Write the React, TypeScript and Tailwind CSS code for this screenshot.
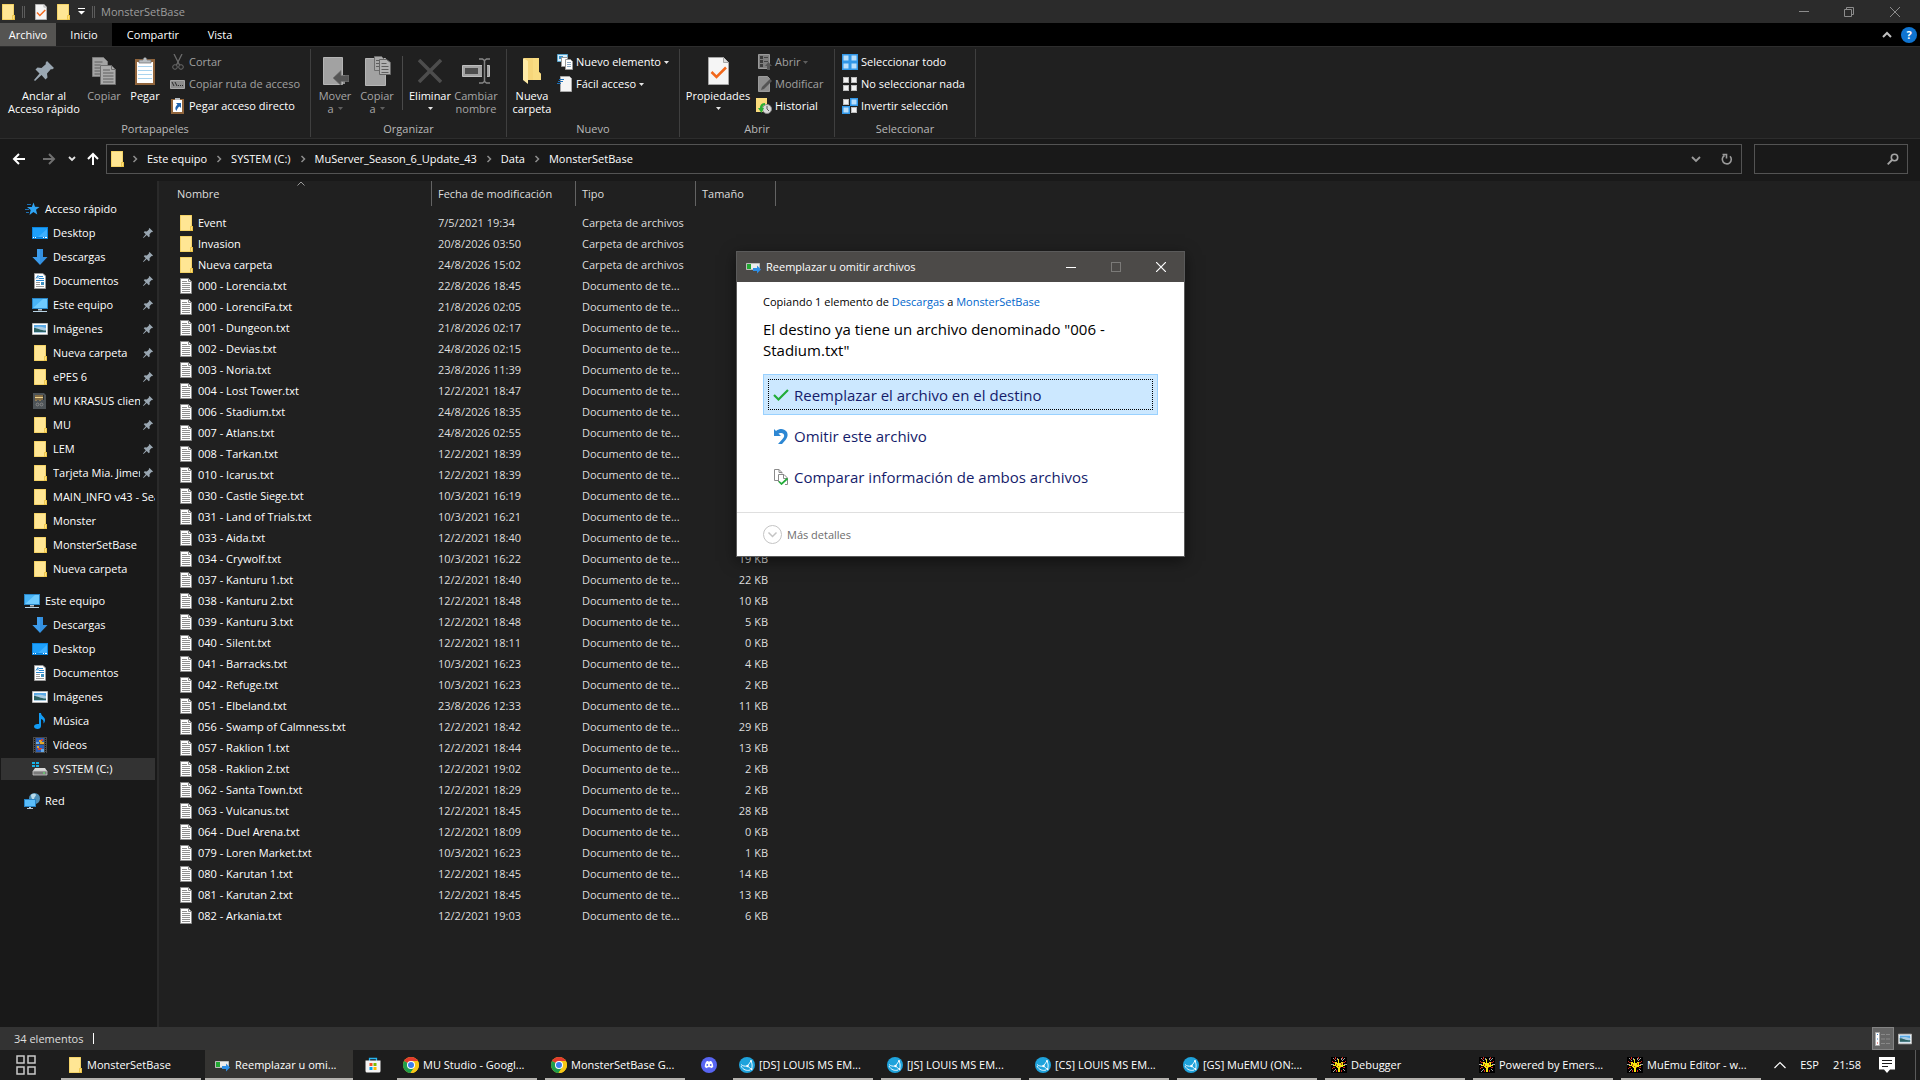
import type { ReactNode } from "react";

type TIcon = { className?: string };
type TFile = { name: string; date: string; size?: string; folder?: boolean };
type TSideItem = { label: string; icon: ReactNode; pinned?: boolean; active?: boolean };

/* ---------- icons ---------- */

const FolderIcon = ({ className = "h-4 w-4" }: TIcon) => (
    <svg className={`shrink-0 ${className}`} viewBox="0 0 16 16">
        <path d="M2 0h12v11h1v5H2z" fill="#e9c03e" />
        <path d="M2.500.500h11v11h-1v4h-10z" fill="#ffe694" />
        <path d="M12.500 11.500h2v4h-2z" fill="#ffdf80" stroke="#e9c03e" strokeWidth="0.700" />
    </svg>
);

const TextFileIcon = () => (
    <svg className="h-4 w-3 shrink-0" viewBox="0 0 12 16">
        <path d="M.500.500h8l3 3v12H.500z" fill="#fff" stroke="#8c8c8c" />
        <path d="M8.500.500v3h3" fill="none" stroke="#8c8c8c" />
        <path d="M2 3.500h5M2 5.500h8M2 7.500h8M2 9.500h8M2 11.500h8M2 13.500h8" stroke="#8f8f8f" />
    </svg>
);

const PinIcon = ({ className = "h-[10px] w-[10px]" }: TIcon) => (
    <svg className={`shrink-0 ${className}`} viewBox="0 0 20 20">
        <path d="M13 0l7 7-2 1.500-1-.500-4 4.500.500 4-2 2-4-4.500L1 20l-1-1 5.500-6.500L1.500 8.500l2-2 4 .500L12 3l-.500-1z" fill="#9aa7b2" />
    </svg>
);

const MonitorIcon = () => (
    <svg className="h-4 w-4 shrink-0" viewBox="0 0 16 16">
        <path d="M0 1h16v11H0z" fill="#2a86c7" />
        <path d="M1 2h14v9H1z" fill="#49b4f7" />
        <path d="M1 11L11 2h4v9z" fill="#6fcbff" />
        <path d="M6 12h4v1.500H6z" fill="#b9c3ca" />
        <path d="M1 14.500h14" stroke="#b9d3e4" />
    </svg>
);

const DesktopIcon = () => (
    <svg className="h-4 w-4 shrink-0" viewBox="0 0 16 16">
        <path d="M0 2h16v12H0z" fill="#0b84dd" />
        <path d="M1 3h14v9H1z" fill="#1ea0fb" />
        <path d="M6 12l9-8v8z" fill="#3fb0ff" />
        <path d="M1 12.500h1M3 12.500h1M11 12.500h1M13 12.500h2" stroke="#fff" />
    </svg>
);

const DownloadsIcon = () => (
    <svg className="h-4 w-4 shrink-0" viewBox="0 0 16 16">
        <path d="M5 0h6v8h4.500L8 16 .500 8H5z" fill="#3390e0" />
        <path d="M5 0h3v15L.500 8H5z" fill="#3e9dec" />
    </svg>
);

const DocumentsIcon = () => (
    <svg className="h-4 w-4 shrink-0" viewBox="0 0 16 16">
        <path d="M2.500.500h8.500l2.500 2.500v12.500h-11z" fill="#fff" stroke="#9b9b9b" />
        <path d="M4 5.500l2-3v3M7 3.500h4M7 5.500h5M4 7.500h8" stroke="#2a88d0" fill="none" />
        <path d="M4 9.500h4M4 11.500h4M4 13.500h8" stroke="#9a9a9a" />
        <path d="M9 9h3v3H9z" fill="#3d8fbf" />
    </svg>
);

const ImagesIcon = ({ className = "h-4 w-4" }: TIcon) => (
    <svg className={`shrink-0 ${className}`} viewBox="0 0 16 16">
        <path d="M.500 2.500h15v11H.500z" fill="#fff" stroke="#b5b5b5" />
        <path d="M2 4h12v4H2z" fill="#5aa9e6" />
        <path d="M2 7c4-2 7-1 12 0v5H2z" fill="#a9cbe2" />
        <path d="M2 7c4 0 6 2.500 12 2.500V11H2z" fill="#2d6263" />
    </svg>
);

const MusicIcon = () => (
    <svg className="h-4 w-4 shrink-0" viewBox="0 0 16 16">
        <path d="M7 0h2c0 3 4 4 4 7 0 1.500-.500 2.500-1.500 3.500.300-3-.500-4-2.500-4.500V13c0 1.700-1.500 3-3.500 3S2 15 2 13.500 3.500 11 5.500 11H7z" fill="#129cf5" />
    </svg>
);

const VideosIcon = () => (
    <svg className="h-4 w-4 shrink-0" viewBox="0 0 16 16">
        <path d="M1 0h14v16H1z" fill="#4a4a4a" />
        <path d="M2.500 1v15M13.500 1v15" stroke="#111" strokeDasharray="1 1" />
        <path d="M4 1h8v6H4zM4 8h8v7H4z" fill="#2b5fb8" />
        <path d="M7 3h3v2h2v2H8V5H7zM5 9h2v2H5z" fill="#e3a92b" />
        <path d="M9 2h2v2H9zM6 11h4v2H6z" fill="#d2452f" />
        <path d="M4 5h3v2H4zM9 12h3v3H9z" fill="#62a9e8" />
    </svg>
);

const DriveIcon = () => (
    <svg className="h-4 w-4 shrink-0" viewBox="0 0 16 16">
        <path d="M0 1h3v2H0zM4 1h3v2H4zM0 4h3v2H0zM4 4h3v2H4z" fill="#17b3ea" />
        <path d="M3 7h10l2 3H1z" fill="#d9d9d9" />
        <path d="M1 10h14v4H1z" fill="#7b7b7b" stroke="#c7c7c7" strokeWidth="0.800" />
        <path d="M11 12h2" stroke="#5eff6d" />
    </svg>
);

const NetworkIcon = () => (
    <svg className="h-4 w-4 shrink-0" viewBox="0 0 16 16">
        <circle cx="10.500" cy="5.500" r="5.500" fill="#4f90b8" />
        <path d="M7 2c2-2 5-1 5 0s-2 2-2 4-3 0-3-4z" fill="#b9dcec" />
        <path d="M0 6h12v8H0z" fill="#2683c6" />
        <path d="M1 7h10v6H1z" fill="#5bbdf9" />
        <path d="M5 14h2v1h2v1H3v-1h2z" fill="#b7c7d2" />
    </svg>
);

const QuickIcon = () => (
    <svg className="h-4 w-4 shrink-0" viewBox="0 0 16 16">
        <path d="M9.500 1.500l1.500 4.300 4.500.200-3.500 2.800 1.300 4.700-3.900-2.500L5.500 14l1.200-5L3 6h4.800z" fill="#2fa5f5" />
        <path d="M3 3.500h4M1 8.500h4M2 11.500h3" stroke="#1c6fb1" />
    </svg>
);

const ArchiveIcon = () => (
    <svg className="h-4 w-4 shrink-0" viewBox="0 0 16 16">
        <path d="M1 0h11l2 2v14H1z" fill="#4d5357" />
        <path d="M3 2h9v5H3z" fill="#2d3033" />
        <path d="M4 2v6M6 2v5M8 2v6M10 2v5" stroke="#d8a657" />
        <path d="M3 4.500h8" stroke="#f0d48c" />
        <circle cx="5.500" cy="11.500" r="1.400" fill="none" stroke="#888" />
        <circle cx="9.500" cy="11.500" r="1.400" fill="none" stroke="#888" />
    </svg>
);

const TransferIcon = () => (
    <svg className="h-4 w-4 shrink-0" viewBox="0 0 16 16">
        <path d="M.500 4.500h13v6H.500z" fill="#ededed" stroke="#bdbdbd" />
        <path d="M1 5h4v5H1z" fill="#23a833" />
        <path d="M7 9h4V6.500l4 4-4 4V12H7z" fill="#2f8fe6" />
    </svg>
);

const PropsIcon = ({ className = "h-4 w-3" }: TIcon) => (
    <svg className={`shrink-0 ${className}`} viewBox="0 0 21 28">
        <path d="M.500.500h15l5 5v22H.500z" fill="#f5f5f5" stroke="#a5a5a5" />
        <path d="M15.500.500v5h5" fill="#dcdcdc" stroke="#a5a5a5" />
        <path d="M3.500 15l5 5L18 10.500" fill="none" stroke="#f2681c" strokeWidth="2.500" />
    </svg>
);

const PinLarge = () => <PinIcon className="h-5 w-5" />;

const CopyIcon = () => (
    <svg className="h-7 w-6" viewBox="0 0 24 28">
        <path d="M.500.500h11l4 4v15H.500z" fill="#a3a3a3" stroke="#7a7a7a" />
        <path d="M2.500 5h8M2.500 8h6M2.500 11h6M2.500 14h6M2.500 17h6" stroke="#5f5f5f" />
        <path d="M8.500 8.500h11l4 4v15h-15z" fill="#ababab" stroke="#6e6e6e" />
        <path d="M19.500 8.500v4h4" fill="none" stroke="#6e6e6e" />
        <path d="M11 13h7M11 16h10.500M11 19h10.500M11 22h10.500M11 25h10.500" stroke="#5f5f5f" />
    </svg>
);

const PasteIcon = () => (
    <svg className="h-7 w-5" viewBox="0 0 20 28">
        <path d="M0 2h20v26H0z" fill="#91653c" />
        <path d="M2 5h16v21H2z" fill="#fff" />
        <path d="M3 9.500h14M3 13.500h14M3 17.500h14M3 21.500h14" stroke="#a9d3ee" />
        <path d="M4 6V3h4c0-3.500 4-3.500 4 0h4v3z" fill="#b9bec2" stroke="#6b6b6b" strokeWidth="0.700" />
    </svg>
);

const MoveToIcon = () => (
    <svg className="h-7 w-7" viewBox="0 0 28 28">
        <path d="M2.500.500h19v27h-19z" fill="#a2a2a2" stroke="#b5b5b5" />
        <path d="M22 18h2v9h-2z" fill="#8f8f8f" />
        <path d="M12 21l8-7.500v5h8v6h-8v4z" fill="#555" stroke="#777" strokeWidth="0.700" />
    </svg>
);

const CopyToIcon = () => (
    <svg className="h-[30px] w-7" viewBox="0 0 28 30">
        <path d="M2.500 2.500h20v27h-20z" fill="#a2a2a2" stroke="#b5b5b5" />
        <path d="M11.500.500h7l3 3v11h-10z" fill="#a9a9a9" stroke="#6e6e6e" />
        <path d="M13 4.500h4M13 7.500h3M13 10.500h3" stroke="#5f5f5f" />
        <path d="M16.500 3.500h7l4 3v12h-11z" fill="#b1b1b1" stroke="#666" />
        <path d="M18.500 7.500h5M18.500 10.500h7M18.500 13.500h7M18.500 16.500h7" stroke="#5f5f5f" />
    </svg>
);

const DeleteIcon = () => (
    <svg className="h-6 w-6" viewBox="0 0 24 24">
        <path d="M1 1l22 22M23 1L1 23" stroke="#4d4d4d" strokeWidth="3.500" />
    </svg>
);

const RenameIcon = () => (
    <svg className="h-[26px] w-7" viewBox="0 0 28 26">
        <path d="M.500 7.500h27v11H.500z" fill="#a3a3a3" stroke="#bdbdbd" />
        <path d="M3 10h13v6H3z" fill="#4d4d4d" />
        <path d="M20 7h5v12h-5z" fill="#202020" />
        <path d="M17 1h3.500l2 1.500 2-1.500H28M17 25h3.500l2-1.500 2 1.500H28M22.500 2v22" fill="none" stroke="#858585" strokeWidth="1.500" />
    </svg>
);

const NewFolderIcon = () => (
    <svg className="h-7 w-[18px]" viewBox="0 0 18 28">
        <path d="M1 1h15v14l2 2v6H1z" fill="#f6d67a" />
        <path d="M10 1h6v14l2 2v6h-8z" fill="#f9dc82" />
        <path d="M0 1l5 3v23L0 23z" fill="#ffeba6" />
    </svg>
);

const ScissorsIcon = () => (
    <svg className="h-4 w-4 shrink-0" viewBox="0 0 16 16" fill="none" stroke="#6b6b6b">
        <path d="M4 0l5.500 11M12 0L6.500 11" strokeWidth="1.300" />
        <circle cx="5" cy="13" r="2.300" />
        <circle cx="11" cy="13" r="2.300" />
    </svg>
);

const PathIcon = () => (
    <svg className="h-4 w-4 shrink-0" viewBox="0 0 16 16">
        <path d="M.500 4.500h14v8H.500z" fill="#8d8d8d" stroke="#a8a8a8" />
        <path d="M2 6l2 4M5 6l2 4M8 9.500h1M10 9.500h1M12 9.500h1" stroke="#2b2b2b" />
    </svg>
);

const ShortcutIcon = () => (
    <svg className="h-4 w-4 shrink-0" viewBox="0 0 16 16">
        <path d="M1 1h13v15H1z" fill="#91653c" />
        <path d="M3 2h9v12H3z" fill="#fff" />
        <path d="M5 0h5v2H5z" fill="#b9bec2" />
        <path d="M6 5h5v5L9.500 8.500C8 9.500 7 11 6.500 13c-2-2.500-1-5 1-6.300z" fill="#1e62ad" />
    </svg>
);

const NewItemIcon = () => (
    <svg className="h-4 w-4 shrink-0" viewBox="0 0 16 16">
        <path d="M.500.500h10v7H.500z" fill="#d8eefb" stroke="#5aa7cf" />
        <path d="M2 2h4v3H2z" fill="#3a93c9" />
        <path d="M4.500 3.500h6v9h-6z" fill="#fff" stroke="#999" />
        <path d="M8.500 5.500h5l2 2v8h-7z" fill="#fff" stroke="#999" />
        <path d="M10 8.500h4M10 10.500h4M10 12.500h4" stroke="#8aa9c6" />
    </svg>
);

const EasyAccessIcon = () => (
    <svg className="h-4 w-4 shrink-0" viewBox="0 0 16 16">
        <path d="M3.500.500h9l2 2v13h-11z" fill="#f6f6f6" stroke="#a9a9a9" />
        <path d="M2 3.500h5M1 5.500h5M0 7.500h4" stroke="#1c6fb8" />
    </svg>
);

const OpenIcon = () => (
    <svg className="h-4 w-4 shrink-0" viewBox="0 0 16 16">
        <path d="M2.500.500h11v14h-11z" fill="#7e7e7e" stroke="#9a9a9a" />
        <path d="M4 2h3v3H4zM4 6h3v3H4zM4 10h3v3H4z" fill="#3c3c3c" />
        <path d="M8 3.500h4M8 7.500h4" stroke="#444" />
        <path d="M9 12l3.500-4 3.500 4h-2v4h-3v-4z" fill="#555" />
    </svg>
);

const EditIcon = () => (
    <svg className="h-4 w-4 shrink-0" viewBox="0 0 16 16">
        <path d="M2.500.500h9l2 2v13h-11z" fill="#8d8d8d" stroke="#9a9a9a" />
        <path d="M5 14l1-3 8-8 2 2-8 8z" fill="#555" />
    </svg>
);

const HistoryIcon = () => (
    <svg className="h-4 w-4 shrink-0" viewBox="0 0 16 16">
        <path d="M0 0h11v14H0z" fill="#fbdc7c" />
        <circle cx="11" cy="11" r="4.500" fill="#d9d9d9" stroke="#8a8a8a" />
        <path d="M11 8v3l2 2" fill="none" stroke="#555" />
        <path d="M9 5C5 5 4 8 4 10H2l3.500 5L8 10H6.500C6.500 8 7.500 7 9 7z" fill="#2cae35" />
    </svg>
);

const tileColors = {
    all: ["b", "b", "b", "b"],
    none: ["w", "w", "w", "w"],
    invert: ["w", "b", "b", "w"],
};

const TilesIcon = ({ kind }: { kind: keyof typeof tileColors }) => (
    <svg className="h-4 w-4 shrink-0" viewBox="0 0 16 16">
        {tileColors[kind].map((c, i) => {
            const x = (i % 2) * 8;
            const y = Math.floor(i / 2) * 8;
            return c === "b" ? (
                <g key={i}>
                    <rect x={x} y={y} width="8" height="8" fill="#3197e8" />
                    <rect x={x + 1.500} y={y + 1.500} width="5" height="5" fill="#b9defa" />
                </g>
            ) : (
                <rect key={i} x={x + 1.500} y={y + 1.500} width="5" height="5" fill="#f2f2f2" stroke="#bdbdbd" />
            );
        })}
    </svg>
);

const Caret = ({ dim }: { dim?: boolean }) => (
    <svg className="h-[3px] w-[5px] shrink-0" viewBox="0 0 5 3">
        <path d="M0 0h5L2.500 3z" fill={dim ? "#5e5e5e" : "#e6e6e6"} />
    </svg>
);

const Chevron = ({ className = "" }: TIcon) => (
    <svg className={`h-2 w-2 shrink-0 ${className}`} viewBox="0 0 8 8">
        <path d="M2.500 1l3 3-3 3" fill="none" stroke="#8d8d8d" strokeWidth="1.500" />
    </svg>
);

const ChromeIcon = () => (
    <svg className="h-4 w-4 shrink-0" viewBox="0 0 16 16">
        <circle cx="8" cy="8" r="8" fill="#f7c716" />
        <path d="M8 8L1.100 4A8 8 0 0 1 14.900 4z" fill="#e33b2e" />
        <path d="M8 8L1.100 4A8 8 0 0 0 7.500 16L11.500 10z" fill="#1f9e4b" />
        <path d="M8 4h6.900A8 8 0 0 1 7.500 16L11.500 10z" fill="#f7c716" />
        <circle cx="8" cy="8" r="4" fill="#fff" />
        <circle cx="8" cy="8" r="3" fill="#3b7ded" />
    </svg>
);

const DiscordIcon = () => (
    <svg className="h-4 w-4" viewBox="0 0 16 16">
        <circle cx="8" cy="8" r="8" fill="#5865f2" />
        <path d="M5.300 4.500c1-.500 1.500-.500 1.700-.500l.300.500h1.400L9 4c.200 0 .700 0 1.700.500 1 1.500 1.600 3.500 1.500 5.500-.800.700-1.600 1-2.300 1.200l-.500-.900H6.600l-.500.900C5.400 11 4.600 10.700 3.800 10c-.100-2 .500-4 1.500-5.500z" fill="#fff" />
        <circle cx="6.300" cy="8" r="0.900" fill="#5865f2" />
        <circle cx="9.700" cy="8" r="0.900" fill="#5865f2" />
    </svg>
);

const StoreIcon = () => (
    <svg className="h-4 w-4" viewBox="0 0 16 16">
        <path d="M4.500 4V1.500h7V4" fill="none" stroke="#27b5f0" strokeWidth="1.300" />
        <path d="M.500 3.500h15V14a1.500 1.500 0 0 1-1.500 1.500H2A1.500 1.500 0 0 1 .500 14z" fill="#f4f4f4" />
        <path d="M4.500 6h3v3h-3z" fill="#f25022" />
        <path d="M8.500 6h3v3h-3z" fill="#7fba00" />
        <path d="M4.500 10h3v3h-3z" fill="#00a4ef" />
        <path d="M8.500 10h3v3h-3z" fill="#ffb900" />
    </svg>
);

const ServerIcon = () => (
    <svg className="h-4 w-4 shrink-0" viewBox="0 0 16 16">
        <circle cx="8" cy="8" r="8" fill="#1fa3dc" />
        <path d="M2 7.500c1.500 1.500 4 2 6.500 1.500L12 4M8.500 9l4 3.500M12 4c1.300 2.500 1.500 5.500.500 8.500M2 9c2 4 6 5 9 4" fill="none" stroke="#e8f7ff" />
        <circle cx="8.500" cy="9" r="1.200" fill="#fff" />
        <circle cx="12" cy="4" r="1" fill="#fff" />
        <circle cx="12.500" cy="12.300" r="1" fill="#fff" />
    </svg>
);

const MuIcon = () => (
    <svg className="h-4 w-4 shrink-0" viewBox="0 0 16 16" shapeRendering="crispEdges">
        <path d="M0 0h16v16H0z" fill="#000" />
        <path d="M2 1h1v1h1v1h1v1H4V3H3V2H2zM13 1h1v1h-1v1h-1v1h-1V3h1V2h1zM0 7h3v1H0zM13 7h3v1h-3zM2 14h1v-1h1v-1h1v1H4v1H3v1H2zM13 14h1v-1h-1v-1h-1v1h1zM6 1h1v2H6zM10 1h1v2h-1z" fill="#a3a3a3" />
        <path d="M1 4h1v1h2v1H2V5H1zM14 4h1v1h-1v1h-2V5h2zM4 0h1v2H4zM11 0h1v2h-1zM1 11h1v-1h2v1H2v1H1zM14 11h-2v-1h2zM5 13h1v2H5zM10 13h1v2h-1zM3 2h1v1H3z" fill="#cf2a20" />
        <path d="M7 2h1v4h2V5h2v3h2v1h-2v1h-2v1H9v4H7v-4H6v-1H5V9H2V8h2V5h2v1h1z" fill="#f5e60f" />
        <path d="M5 7h1v2H5zM10 6h1v2h-1zM7 9h1v1H7zM9 10h1v1H9z" fill="#c0391c" />
    </svg>
);

/* ---------- data ---------- */

const quickAccess: TSideItem[] = [
    { label: "Desktop", icon: <DesktopIcon />, pinned: true },
    { label: "Descargas", icon: <DownloadsIcon />, pinned: true },
    { label: "Documentos", icon: <DocumentsIcon />, pinned: true },
    { label: "Este equipo", icon: <MonitorIcon />, pinned: true },
    { label: "Imágenes", icon: <ImagesIcon />, pinned: true },
    { label: "Nueva carpeta", icon: <FolderIcon />, pinned: true },
    { label: "ePES 6", icon: <FolderIcon />, pinned: true },
    { label: "MU KRASUS cliente", icon: <ArchiveIcon />, pinned: true },
    { label: "MU", icon: <FolderIcon />, pinned: true },
    { label: "LEM", icon: <FolderIcon />, pinned: true },
    { label: "Tarjeta Mia. Jimena", icon: <FolderIcon />, pinned: true },
    { label: "MAIN_INFO v43 - Season", icon: <FolderIcon /> },
    { label: "Monster", icon: <FolderIcon /> },
    { label: "MonsterSetBase", icon: <FolderIcon /> },
    { label: "Nueva carpeta", icon: <FolderIcon /> },
];

const computer: TSideItem[] = [
    { label: "Descargas", icon: <DownloadsIcon /> },
    { label: "Desktop", icon: <DesktopIcon /> },
    { label: "Documentos", icon: <DocumentsIcon /> },
    { label: "Imágenes", icon: <ImagesIcon /> },
    { label: "Música", icon: <MusicIcon /> },
    { label: "Vídeos", icon: <VideosIcon /> },
    { label: "SYSTEM (C:)", icon: <DriveIcon />, active: true },
];

const files: TFile[] = [
    { name: "Event", date: "7/5/2021 19:34", folder: true },
    { name: "Invasion", date: "20/8/2026 03:50", folder: true },
    { name: "Nueva carpeta", date: "24/8/2026 15:02", folder: true },
    { name: "000 - Lorencia.txt", date: "22/8/2026 18:45" },
    { name: "000 - LorenciFa.txt", date: "21/8/2026 02:05" },
    { name: "001 - Dungeon.txt", date: "21/8/2026 02:17" },
    { name: "002 - Devias.txt", date: "24/8/2026 02:15" },
    { name: "003 - Noria.txt", date: "23/8/2026 11:39" },
    { name: "004 - Lost Tower.txt", date: "12/2/2021 18:47" },
    { name: "006 - Stadium.txt", date: "24/8/2026 18:35" },
    { name: "007 - Atlans.txt", date: "24/8/2026 02:55" },
    { name: "008 - Tarkan.txt", date: "12/2/2021 18:39" },
    { name: "010 - Icarus.txt", date: "12/2/2021 18:39" },
    { name: "030 - Castle Siege.txt", date: "10/3/2021 16:19" },
    { name: "031 - Land of Trials.txt", date: "10/3/2021 16:21" },
    { name: "033 - Aida.txt", date: "12/2/2021 18:40" },
    { name: "034 - Crywolf.txt", date: "10/3/2021 16:22", size: "19 KB" },
    { name: "037 - Kanturu 1.txt", date: "12/2/2021 18:40", size: "22 KB" },
    { name: "038 - Kanturu 2.txt", date: "12/2/2021 18:48", size: "10 KB" },
    { name: "039 - Kanturu 3.txt", date: "12/2/2021 18:48", size: "5 KB" },
    { name: "040 - Silent.txt", date: "12/2/2021 18:11", size: "0 KB" },
    { name: "041 - Barracks.txt", date: "10/3/2021 16:23", size: "4 KB" },
    { name: "042 - Refuge.txt", date: "10/3/2021 16:23", size: "2 KB" },
    { name: "051 - Elbeland.txt", date: "23/8/2026 12:33", size: "11 KB" },
    { name: "056 - Swamp of Calmness.txt", date: "12/2/2021 18:42", size: "29 KB" },
    { name: "057 - Raklion 1.txt", date: "12/2/2021 18:44", size: "13 KB" },
    { name: "058 - Raklion 2.txt", date: "12/2/2021 19:02", size: "2 KB" },
    { name: "062 - Santa Town.txt", date: "12/2/2021 18:29", size: "2 KB" },
    { name: "063 - Vulcanus.txt", date: "12/2/2021 18:45", size: "28 KB" },
    { name: "064 - Duel Arena.txt", date: "12/2/2021 18:09", size: "0 KB" },
    { name: "079 - Loren Market.txt", date: "10/3/2021 16:23", size: "1 KB" },
    { name: "080 - Karutan 1.txt", date: "12/2/2021 18:45", size: "14 KB" },
    { name: "081 - Karutan 2.txt", date: "12/2/2021 18:45", size: "13 KB" },
    { name: "082 - Arkania.txt", date: "12/2/2021 19:03", size: "6 KB" },
];

const crumbs = ["Este equipo", "SYSTEM (C:)", "MuServer_Season_6_Update_43", "Data", "MonsterSetBase"];

/* ---------- ribbon ---------- */

const BigButton = ({
    icon,
    lines,
    width,
    dim,
    caret,
}: {
    icon: ReactNode;
    lines: string[];
    width: string;
    dim?: boolean;
    caret?: "inline" | "below";
}) => (
    <button className={`flex shrink-0 flex-col items-center pt-1 ${width} ${dim ? "text-[#a6a6a6]" : "text-white"}`}>
        <span className="flex h-9 items-center justify-center">{icon}</span>
        {lines.map((line, i) => (
            <span key={line} className="flex h-[13px] items-center gap-1 whitespace-nowrap leading-[13px]">
                {line}
                {caret === "inline" && i === lines.length - 1 && <Caret dim />}
            </span>
        ))}
        {caret === "below" && (
            <span className="flex h-[13px] items-center">
                <Caret />
            </span>
        )}
    </button>
);

const SmallButton = ({ icon, label, dim, caret }: { icon: ReactNode; label: string; dim?: boolean; caret?: boolean }) => (
    <button className={`flex h-[22px] items-center gap-[3px] whitespace-nowrap ${dim ? "text-[#a0a0a0]" : "text-white"}`}>
        {icon}
        <span>{label}</span>
        {caret && <Caret dim={dim} />}
    </button>
);

const RibbonGroup = ({ title, width, children }: { title: string; width: string; children: ReactNode }) => (
    <section className={`flex shrink-0 flex-col border-r border-[#3f3f3f] ${width}`}>
        <div className="flex h-[72px] items-start">{children}</div>
        <h2 className="text-center leading-4 text-[#b8b8b8]">{title}</h2>
    </section>
);

const Ribbon = () => (
    <div className="flex border-y border-[#2d2d2d] bg-[#202020] pt-[2px] pb-px">
        <RibbonGroup title="Portapapeles" width="w-[311px]">
            <BigButton icon={<PinLarge />} lines={["Anclar al", "Acceso rápido"]} width="w-[88px]" />
            <BigButton icon={<CopyIcon />} lines={["Copiar"]} width="w-[32px]" dim />
            <BigButton icon={<PasteIcon />} lines={["Pegar"]} width="w-[50px]" />
            <div className="flex flex-col pt-[2px]">
                <SmallButton icon={<ScissorsIcon />} label="Cortar" dim />
                <SmallButton icon={<PathIcon />} label="Copiar ruta de acceso" dim />
                <SmallButton icon={<ShortcutIcon />} label="Pegar acceso directo" />
            </div>
        </RibbonGroup>
        <RibbonGroup title="Organizar" width="w-[196px]">
            <BigButton icon={<MoveToIcon />} lines={["Mover", "a"]} width="ml-[3px] w-[42px]" dim caret="inline" />
            <BigButton icon={<CopyToIcon />} lines={["Copiar", "a"]} width="w-[42px]" dim caret="inline" />
            <span className="mx-1 mt-[7px] h-[54px] w-px bg-[#4a4a4a]" />
            <BigButton icon={<DeleteIcon />} lines={["Eliminar"]} width="w-[46px]" caret="below" />
            <BigButton icon={<RenameIcon />} lines={["Cambiar", "nombre"]} width="w-[46px]" dim />
        </RibbonGroup>
        <RibbonGroup title="Nuevo" width="w-[173px]">
            <BigButton icon={<NewFolderIcon />} lines={["Nueva", "carpeta"]} width="w-[50px]" />
            <div className="flex flex-col pt-[2px]">
                <SmallButton icon={<NewItemIcon />} label="Nuevo elemento" caret />
                <SmallButton icon={<EasyAccessIcon />} label="Fácil acceso" caret />
            </div>
        </RibbonGroup>
        <RibbonGroup title="Abrir" width="w-[155px]">
            <BigButton icon={<PropsIcon className="h-7 w-[21px]" />} lines={["Propiedades"]} width="w-[76px]" caret="below" />
            <div className="flex flex-col pt-[2px]">
                <SmallButton icon={<OpenIcon />} label="Abrir" dim caret />
                <SmallButton icon={<EditIcon />} label="Modificar" dim />
                <SmallButton icon={<HistoryIcon />} label="Historial" />
            </div>
        </RibbonGroup>
        <RibbonGroup title="Seleccionar" width="w-[141px]">
            <div className="flex flex-col pt-[2px] pl-[7px]">
                <SmallButton icon={<TilesIcon kind="all" />} label="Seleccionar todo" />
                <SmallButton icon={<TilesIcon kind="none" />} label="No seleccionar nada" />
                <SmallButton icon={<TilesIcon kind="invert" />} label="Invertir selección" />
            </div>
        </RibbonGroup>
    </div>
);

/* ---------- window chrome ---------- */

const TitleBar = () => (
    <header className="flex h-[23px] items-center bg-[#2b2b2b]">
        <FolderIcon />
        <span className="ml-[6px] h-3 w-[3px] border-x border-[#5c5c5c]" />
        <span className="ml-[10px] flex">
            <PropsIcon />
        </span>
        <FolderIcon className="ml-2 h-4 w-4" />
        <svg className="ml-[7px] h-[7px] w-[7px]" viewBox="0 0 7 7">
            <path d="M0 .500h7" stroke="#fff" />
            <path d="M0 3h7L3.500 6.500z" fill="#fff" />
        </svg>
        <span className="ml-[7px] h-3 w-[3px] border-x border-[#5c5c5c]" />
        <h1 className="ml-[6px] flex-1 text-[#9d9d9d]">MonsterSetBase</h1>
        <button aria-label="Minimizar" className="flex h-full w-[45px] items-center justify-center">
            <span className="h-px w-[10px] bg-[#8c8c8c]" />
        </button>
        <button aria-label="Restaurar" className="flex h-full w-[46px] items-center justify-center">
            <svg className="h-[10px] w-[10px]" viewBox="0 0 10 10" fill="none" stroke="#8c8c8c">
                <path d="M.500 2.500h7v7h-7zM2.500 2.500v-2h7v7h-2" />
            </svg>
        </button>
        <button aria-label="Cerrar" className="mr-[2px] flex h-full w-[46px] items-center justify-center">
            <svg className="h-[10px] w-[10px]" viewBox="0 0 10 10" stroke="#8c8c8c">
                <path d="M0 0l10 10M10 0L0 10" />
            </svg>
        </button>
    </header>
);

const Tabs = () => (
    <nav className="flex h-[23px] items-center bg-black text-white">
        <button className="h-full w-14 bg-[#555452]">Archivo</button>
        <button className="h-full w-14 bg-[#202020]">Inicio</button>
        <button className="h-full w-[82px]">Compartir</button>
        <button className="h-full w-[52px]">Vista</button>
        <span className="flex-1" />
        <button aria-label="Minimizar la cinta" className="mr-[9px]">
            <svg className="h-[10px] w-[10px]" viewBox="0 0 10 10">
                <path d="M1 7l4-4 4 4" fill="none" stroke="#c0c0c0" strokeWidth="2" />
            </svg>
        </button>
        <button aria-label="Ayuda" className="mr-[3px] flex h-4 w-4 items-center justify-center rounded-full bg-[#0f74d1] font-bold">
            ?
        </button>
    </nav>
);

const AddressBar = () => (
    <div className="flex items-center bg-[#191919] pt-[5px] pr-3 pb-[7px] pl-3">
        <button aria-label="Atrás">
            <svg className="h-[14px] w-[14px]" viewBox="0 0 14 14">
                <path d="M13 7H2M7 2L2 7l5 5" fill="none" stroke="#fff" strokeWidth="2" />
            </svg>
        </button>
        <button aria-label="Adelante" className="ml-4">
            <svg className="h-[14px] w-[14px]" viewBox="0 0 14 14">
                <path d="M1 7h11M7 2l5 5-5 5" fill="none" stroke="#6f6f6f" strokeWidth="2" />
            </svg>
        </button>
        <button aria-label="Ubicaciones recientes" className="ml-3">
            <svg className="h-2 w-2" viewBox="0 0 8 8">
                <path d="M1 2l3 3 3-3" fill="none" stroke="#e4e4e4" strokeWidth="1.800" />
            </svg>
        </button>
        <button aria-label="Subir" className="ml-[10px]">
            <svg className="h-[14px] w-[14px]" viewBox="0 0 14 14">
                <path d="M7 13V2M2 7l5-5 5 5" fill="none" stroke="#fff" strokeWidth="2" />
            </svg>
        </button>
        <div className="ml-[6px] flex h-[30px] flex-1 items-center border border-[#535353] pl-[2px] text-white">
            <FolderIcon />
            {crumbs.map((c, i) => (
                <span key={c} className="flex items-center">
                    <Chevron className={i === 0 ? "mr-2 ml-[6px]" : "mx-2"} />
                    <a href="#">{c}</a>
                </span>
            ))}
            <span className="flex-1" />
            <button aria-label="Ubicaciones anteriores" className="mr-5">
                <svg className="h-[10px] w-[10px]" viewBox="0 0 10 10">
                    <path d="M1 3l4 4 4-4" fill="none" stroke="#9a9a9a" strokeWidth="1.800" />
                </svg>
            </button>
            <button aria-label="Actualizar" className="mr-2">
                <svg className="h-3 w-3" viewBox="0 0 12 12">
                    <path d="M3.500 2.500A4.500 4.500 0 1 0 9 3.200M1.500 1.500h4v4" fill="none" stroke="#9a9a9a" strokeWidth="1.600" />
                </svg>
            </button>
        </div>
        <label className="ml-3 flex h-[30px] w-[154px] items-center border border-[#535353] pr-2">
            <input aria-label="Buscar en MonsterSetBase" className="min-w-0 flex-1 bg-transparent text-white outline-none" />
            <svg className="h-3 w-3" viewBox="0 0 12 12">
                <circle cx="7.500" cy="4.500" r="3.200" fill="none" stroke="#a5a5a5" strokeWidth="1.600" />
                <path d="M5 7L.700 11.300" stroke="#a5a5a5" strokeWidth="1.800" />
            </svg>
        </label>
    </div>
);

/* ---------- navigation pane ---------- */

const SideRoot = ({ label, icon }: TSideItem) => (
    <a href="#" className="flex h-6 items-center gap-[5px] pl-6">
        {icon}
        {label}
    </a>
);

const SideRow = ({ label, icon, pinned, active }: TSideItem) => (
    <a href="#" className={`ml-px mr-[2px] flex h-6 items-center pl-[31px] ${active ? "border-y border-[#191919] bg-[#333]" : ""}`}>
        {icon}
        <span className="ml-[5px] min-w-0 flex-1 overflow-hidden whitespace-nowrap">{label}</span>
        {pinned && <PinIcon className="mr-[2px] ml-[3px] h-[10px] w-[10px]" />}
    </a>
);

const Sidebar = () => (
    <nav className="w-[159px] shrink-0 border-r-2 border-[#2a2a2a] bg-[#191919] pt-4 text-white">
        <SideRoot label="Acceso rápido" icon={<QuickIcon />} />
        {quickAccess.map((item, i) => (
            <SideRow key={i} {...item} />
        ))}
        <div className="mt-2">
            <SideRoot label="Este equipo" icon={<MonitorIcon />} />
            {computer.map((item) => (
                <SideRow key={item.label} {...item} />
            ))}
        </div>
        <div className="mt-2">
            <SideRoot label="Red" icon={<NetworkIcon />} />
        </div>
    </nav>
);

/* ---------- file list ---------- */

const FileTable = () => (
    <main className="min-w-0 flex-1 bg-[#202020] pl-3">
        <table className="table-fixed border-separate border-spacing-0 text-[#dedede]">
            <thead>
                <tr className="h-[25px] text-left">
                    <th className="relative w-[261px] border-r border-[#636363] p-0 pl-[6px] font-normal">
                        Nombre
                        <svg className="absolute top-0 left-1/2 h-[5px] w-2 -translate-x-1/2" viewBox="0 0 8 5">
                            <path d="M.500 4.500L4 1l3.500 3.500" fill="none" stroke="#9a9a9a" />
                        </svg>
                    </th>
                    <th className="w-[144px] border-r border-[#636363] p-0 pl-[6px] font-normal">Fecha de modificación</th>
                    <th className="w-[120px] border-r border-[#636363] p-0 pl-[6px] font-normal">Tipo</th>
                    <th className="w-[80px] border-r border-[#636363] p-0 pl-[6px] font-normal">Tamaño</th>
                </tr>
            </thead>
            <tbody>
                <tr className="h-[6px]" />
                {files.map((f) => (
                    <tr key={f.name} className="h-[21px] whitespace-nowrap">
                        <td className="p-0 text-white">
                            <span className="flex items-center gap-[2px] pl-[5px]">
                                <span className="flex w-5 justify-center">{f.folder ? <FolderIcon /> : <TextFileIcon />}</span>
                                {f.name}
                            </span>
                        </td>
                        <td className="p-0 pl-[6px]">{f.date}</td>
                        <td className="p-0 pl-[6px]">{f.folder ? "Carpeta de archivos" : "Documento de te..."}</td>
                        <td className="p-0 pr-2 text-right">{f.size}</td>
                    </tr>
                ))}
            </tbody>
        </table>
    </main>
);

/* ---------- dialog ---------- */

const ReplaceDialog = () => (
    <section
        role="dialog"
        aria-label="Reemplazar u omitir archivos"
        className="absolute top-[251px] left-[736px] w-[449px] border border-[#5a5a5a] bg-white text-black shadow-[0_4px_14px_rgba(0,0,0,0.5)]"
    >
        <header className="flex h-[30px] items-center bg-[#4c4a48] pl-[9px] text-white">
            <TransferIcon />
            <h2 className="ml-1 flex-1">Reemplazar u omitir archivos</h2>
            <button aria-label="Minimizar" className="flex h-full w-[45px] items-center justify-center">
                <span className="h-px w-[10px] bg-white" />
            </button>
            <button aria-label="Maximizar" disabled className="flex h-full w-[45px] items-center justify-center">
                <span className="h-[10px] w-[10px] border border-[#7b7a78]" />
            </button>
            <button aria-label="Cerrar" className="flex h-full w-[46px] items-center justify-center">
                <svg className="h-[10px] w-[10px]" viewBox="0 0 10 10" stroke="#fff" strokeWidth="1.200">
                    <path d="M0 0l10 10M10 0L0 10" />
                </svg>
            </button>
        </header>

        <div className="px-[26px] pt-3">
            <p className="leading-4">
                Copiando 1 elemento de{" "}
                <a href="#" className="text-[#0066cc]">
                    Descargas
                </a>{" "}
                a{" "}
                <a href="#" className="text-[#0066cc]">
                    MonsterSetBase
                </a>
            </p>
            <p className="mt-[9px] pr-10 text-[15px] leading-[21px]">El destino ya tiene un archivo denominado "006 - Stadium.txt"</p>

            <div className="mt-[13px] flex flex-col text-[15px] text-[#151c6b]">
                <button className="border border-[#99d1ff] bg-[#cce8ff] p-1 text-left">
                    <span className="flex h-[31px] items-center gap-[5px] border border-dotted border-black pl-1">
                        <svg className="h-4 w-4" viewBox="0 0 16 16">
                            <path d="M1 8l4.500 4.500L15 3" fill="none" stroke="#22ac38" strokeWidth="2.200" />
                        </svg>
                        Reemplazar el archivo en el destino
                    </span>
                </button>
                <button className="flex h-[41px] items-center gap-[5px] pl-[10px]">
                    <svg className="h-4 w-4" viewBox="0 0 16 16">
                        <path d="M1 1l2 2c4-3 8-2.500 10.500.500 2 3 1 6-1 8.500L9 16H5l4.500-5c2-2 2-4 1-5S7 4.500 5.500 5.500L8 8H1z" fill="#2d87d3" />
                    </svg>
                    Omitir este archivo
                </button>
                <button className="flex h-[41px] items-center gap-[5px] pl-[10px]">
                    <svg className="h-4 w-4" viewBox="0 0 16 16" fill="none" stroke="#8a8a8a">
                        <path d="M5 11.500H1.500v-11H6l3 3v1M6 .500v3h3" />
                        <path d="M5.500 13V5.500H11l3.500 3.500v6.500H12M10.500 5.500v4h4" />
                        <path d="M6 12.500l2.500 2.500L14.500 9.500" stroke="#22ac38" strokeWidth="1.700" />
                    </svg>
                    Comparar información de ambos archivos
                </button>
            </div>
        </div>

        <footer className="mt-[15px] flex h-11 items-center border-t border-[#dfdfdf] pl-[26px]">
            <button className="flex items-center gap-[5px] text-[#6d6d6d]">
                <svg className="h-[19px] w-[19px]" viewBox="0 0 19 19" fill="none" stroke="#c4c4c4">
                    <circle cx="9.500" cy="9.500" r="9" />
                    <path d="M5.500 7.500l4 4 4-4" strokeWidth="1.500" />
                </svg>
                Más detalles
            </button>
        </footer>
    </section>
);

/* ---------- bottom bars ---------- */

const StatusBar = () => (
    <footer className="flex h-[23px] items-center bg-[#333] pl-[14px] text-[#dedede]">
        <span>34 elementos</span>
        <span className="ml-[10px] h-[11px] w-px bg-white" />
        <span className="flex-1" />
        <button aria-label="Detalles" className="flex h-full w-[22px] items-center justify-center border border-[#838383] bg-[#666]">
            <svg className="h-[14px] w-4" viewBox="0 0 16 14">
                <path d="M.500.500h4v13h-4z" fill="#fff" stroke="#aaa" />
                <path d="M2 2.500h1M2 7h1" stroke="#357ec7" />
                <path d="M2 11h1" stroke="#c33" />
                <path d="M6 2.500h4M11 2.500h4M6 7h4M11 7h4M6 11.500h4M11 11.500h4" stroke="#888" />
            </svg>
        </button>
        <button aria-label="Iconos grandes" className="mr-2 ml-1">
            <ImagesIcon className="h-4 w-[14px]" />
        </button>
    </footer>
);

const Task = ({ icon, label, active }: { icon: ReactNode; label: string; active?: boolean }) =>
    active ? (
        <button className="flex h-full w-[148px] items-center gap-1 border-b-2 border-[#b4b2ae] bg-[#353432] pt-[2px] pl-[10px] whitespace-nowrap">
            {icon}
            {label}
        </button>
    ) : (
        <button className="mx-1 flex h-full w-[140px] items-center gap-1 border-b-2 border-[#b4b2ae] pt-[2px] pl-[6px] whitespace-nowrap">
            {icon}
            {label}
        </button>
    );

const Taskbar = () => (
    <footer className="flex h-[30px] items-center bg-[#1d1d1d] text-white">
        <button aria-label="Vista de tareas" className="flex w-[57px] pl-4">
            <svg className="h-5 w-5" viewBox="0 0 20 20" fill="none" stroke="#c9c9c9" strokeWidth="1.500">
                <path d="M1 1h7v7H1zM12 1h7v7h-7zM1 12h7v7H1zM12 12h7v7h-7z" />
            </svg>
        </button>
        <Task icon={<FolderIcon />} label="MonsterSetBase" />
        <Task icon={<TransferIcon />} label="Reemplazar u omi..." active />
        <button aria-label="Microsoft Store" className="flex w-10 justify-center">
            <StoreIcon />
        </button>
        <Task icon={<ChromeIcon />} label="MU Studio - Googl..." />
        <Task icon={<ChromeIcon />} label="MonsterSetBase G..." />
        <button aria-label="Discord" className="flex w-10 justify-center">
            <DiscordIcon />
        </button>
        <Task icon={<ServerIcon />} label="[DS] LOUIS MS EM..." />
        <Task icon={<ServerIcon />} label="[JS] LOUIS MS EM..." />
        <Task icon={<ServerIcon />} label="[CS] LOUIS MS EM..." />
        <Task icon={<ServerIcon />} label="[GS] MuEMU (ON:..." />
        <Task icon={<MuIcon />} label="Debugger" />
        <Task icon={<MuIcon />} label="Powered by Emers..." />
        <Task icon={<MuIcon />} label="MuEmu Editor - w..." />
        <span className="flex-1" />
        <button aria-label="Mostrar iconos ocultos">
            <svg className="h-2 w-3" viewBox="0 0 12 8">
                <path d="M.500 7L6 1.500 11.500 7" fill="none" stroke="#fff" strokeWidth="1.200" />
            </svg>
        </button>
        <button className="ml-[14px]">ESP</button>
        <span className="ml-[14px]">21:58</span>
        <button aria-label="Notificaciones" className="mr-5 ml-[18px]">
            <svg className="h-4 w-4" viewBox="0 0 16 16">
                <path d="M0 0h16v12.500h-5L8 16l-3-3.500H0z" fill="#fff" />
                <path d="M3 3.500h10M3 6.500h10M3 9.500h6" stroke="#1d1d1d" />
            </svg>
        </button>
        <span className="mr-1 h-full w-px bg-[#5a5a5a]" />
    </footer>
);

export default function App() {
    return (
        <div className="relative flex min-h-screen flex-col bg-[#202020] font-['Open_Sans','Liberation_Sans',sans-serif] text-[11px] leading-4">
            <TitleBar />
            <Tabs />
            <Ribbon />
            <AddressBar />
            <div className="flex flex-1">
                <Sidebar />
                <FileTable />
            </div>
            <StatusBar />
            <Taskbar />
            <ReplaceDialog />
        </div>
    );
}
